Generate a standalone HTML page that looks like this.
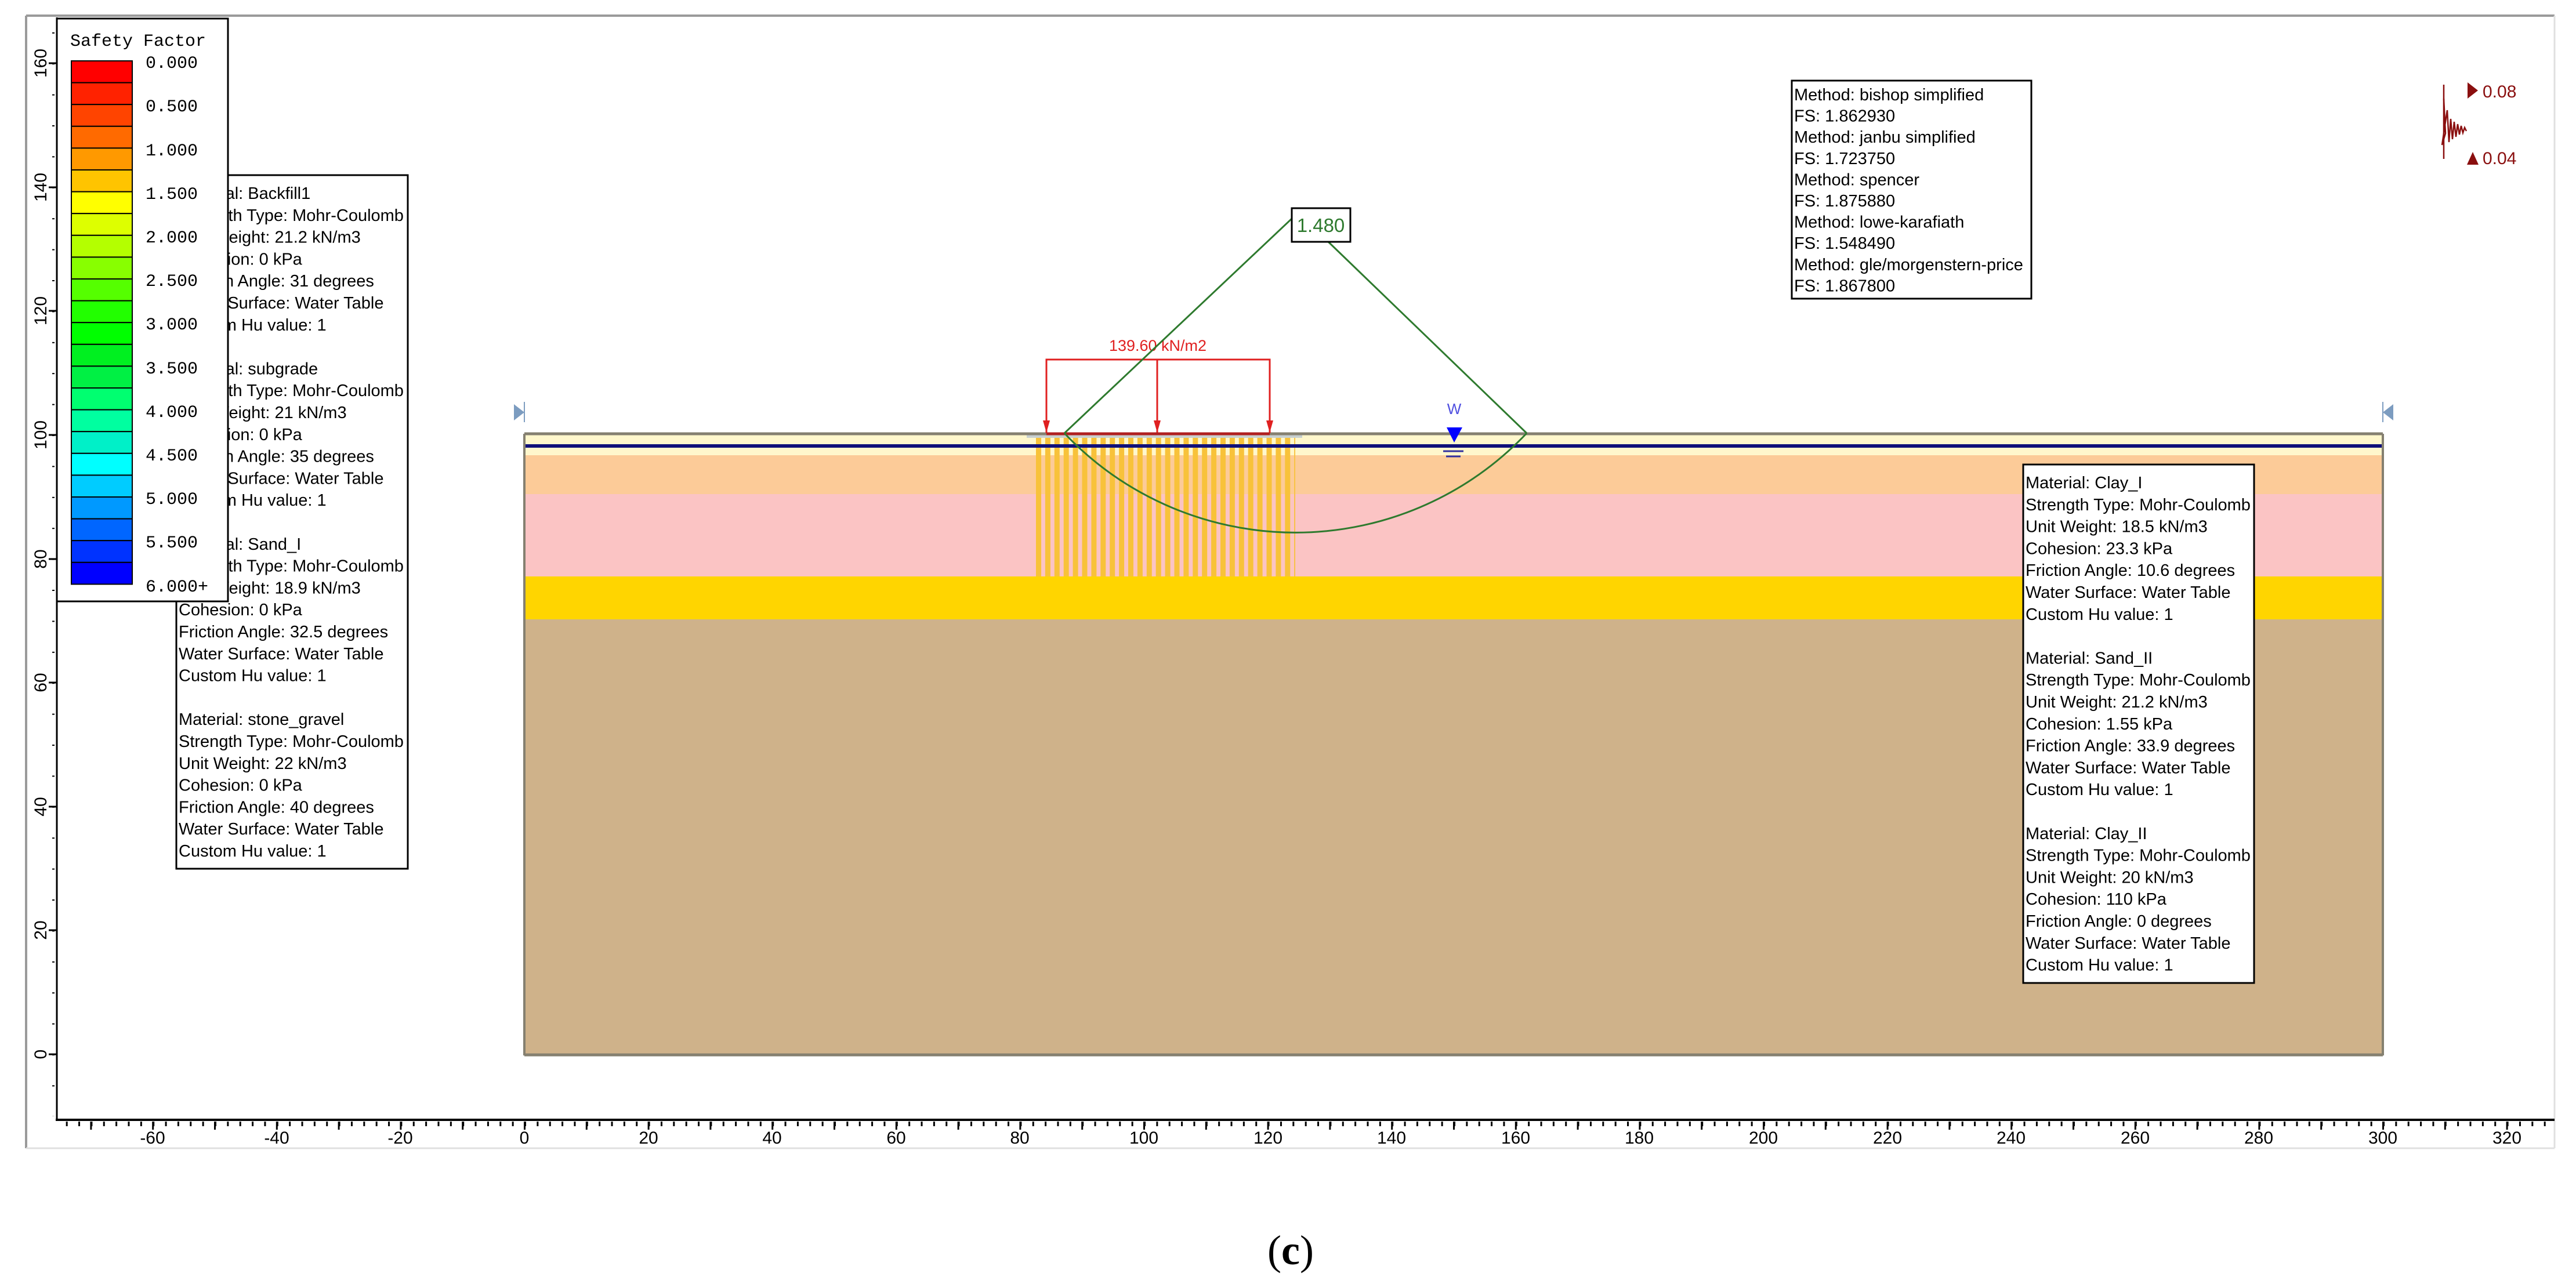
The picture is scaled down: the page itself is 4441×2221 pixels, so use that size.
<!DOCTYPE html>
<html><head><meta charset="utf-8"><style>
html,body{margin:0;padding:0;background:#fff;width:4441px;height:2221px;overflow:hidden}
svg{display:block}
.t{font-family:"Liberation Sans",Arial,sans-serif;font-size:29px;fill:#000}
.m{font-family:"Liberation Mono",monospace;font-size:30px;fill:#000}
.ax{font-family:"Liberation Sans",Arial,sans-serif;font-size:30px;fill:#000}
</style></head><body>
<svg width="4441" height="2221" viewBox="0 0 4441 2221" xmlns="http://www.w3.org/2000/svg">
<defs>
<pattern id="xmin" x="904" y="0" width="21.36" height="2221" patternUnits="userSpaceOnUse"><rect x="0" y="1934" width="3" height="8" fill="#000"/></pattern>
<pattern id="xmaj" x="903" y="0" width="106.8" height="2221" patternUnits="userSpaceOnUse"><rect x="0" y="1934" width="3" height="14" fill="#000"/></pattern>
<pattern id="ymin" x="0" y="1818" width="100" height="53.4" patternUnits="userSpaceOnUse"><rect x="90" y="-1" width="4" height="3" fill="#000"/></pattern>
<pattern id="cols" x="1786" y="0" width="15.9" height="100" patternUnits="userSpaceOnUse"><rect x="0" y="0" width="9" height="100" fill="#f8c23a"/></pattern>
</defs>
<rect width="4441" height="2221" fill="#fff"/>
<line x1="45" y1="27" x2="45" y2="1980" stroke="#9a9a9a" stroke-width="4"/>
<line x1="45" y1="27" x2="4404" y2="27" stroke="#9a9a9a" stroke-width="4"/>
<line x1="45" y1="1980" x2="4404" y2="1980" stroke="#e0e0e0" stroke-width="3"/>
<line x1="4404" y1="27" x2="4404" y2="1980" stroke="#e0e0e0" stroke-width="3"/>
<line x1="98" y1="30" x2="98" y2="1932" stroke="#000" stroke-width="3"/>
<line x1="96" y1="1931" x2="4404" y2="1931" stroke="#000" stroke-width="4"/>
<rect x="100" y="1930" width="4300" height="30" fill="url(#xmin)"/>
<rect x="100" y="1930" width="4300" height="30" fill="url(#xmaj)"/>
<rect x="80" y="30" width="17" height="1895" fill="url(#ymin)"/>
<g stroke="#000" stroke-width="3">
<line x1="84" y1="109" x2="97" y2="109"/><line x1="84" y1="323" x2="97" y2="323"/><line x1="84" y1="536" x2="97" y2="536"/><line x1="84" y1="750" x2="97" y2="750"/><line x1="84" y1="964" x2="97" y2="964"/><line x1="84" y1="1177" x2="97" y2="1177"/><line x1="84" y1="1391" x2="97" y2="1391"/><line x1="84" y1="1604" x2="97" y2="1604"/><line x1="84" y1="1818" x2="97" y2="1818"/>
</g>
<g class="ax" text-anchor="middle">
<text transform="translate(80,109) rotate(-90)">160</text>
<text transform="translate(80,323) rotate(-90)">140</text>
<text transform="translate(80,536) rotate(-90)">120</text>
<text transform="translate(80,750) rotate(-90)">100</text>
<text transform="translate(80,964) rotate(-90)">80</text>
<text transform="translate(80,1177) rotate(-90)">60</text>
<text transform="translate(80,1391) rotate(-90)">40</text>
<text transform="translate(80,1604) rotate(-90)">20</text>
<text transform="translate(80,1818) rotate(-90)">0</text>
</g>
<g class="ax" text-anchor="middle" transform="translate(0,1972)">
<text x="263" y="0">-60</text><text x="477" y="0">-40</text><text x="690" y="0">-20</text><text x="904" y="0">0</text>
<text x="1118" y="0">20</text><text x="1331" y="0">40</text><text x="1545" y="0">60</text><text x="1758" y="0">80</text>
<text x="1972" y="0">100</text><text x="2186" y="0">120</text><text x="2399" y="0">140</text><text x="2613" y="0">160</text>
<text x="2826" y="0">180</text><text x="3040" y="0">200</text><text x="3254" y="0">220</text><text x="3467" y="0">240</text>
<text x="3681" y="0">260</text><text x="3894" y="0">280</text><text x="4108" y="0">300</text><text x="4322" y="0">320</text>
</g>
<rect x="904" y="750" width="3204" height="1068" fill="#cfb28a"/>
<rect x="904" y="750" width="3204" height="35" fill="#fff7cc"/>
<rect x="904" y="785" width="3204" height="67" fill="#fccb98"/>
<rect x="904" y="852" width="3204" height="142" fill="#fbc4c4"/>
<rect x="904" y="994" width="3204" height="74" fill="#ffd500"/>
<rect x="1786" y="754" width="447" height="240" fill="url(#cols)"/>
<rect x="1770" y="749" width="475" height="6" fill="#c8d0d0"/>
<rect x="904" y="766" width="3204" height="6" fill="#10107a"/>
<line x1="904" y1="748" x2="4108" y2="748" stroke="#858070" stroke-width="5"/>
<line x1="904" y1="748" x2="904" y2="1820" stroke="#858070" stroke-width="4"/>
<line x1="4108" y1="748" x2="4108" y2="1820" stroke="#858070" stroke-width="4"/>
<line x1="904" y1="1819" x2="4108" y2="1819" stroke="#858070" stroke-width="5"/>
<polygon points="886,697 904,711 886,725" fill="#7c9cc0"/>
<line x1="904" y1="693" x2="904" y2="728" stroke="#7c9cc0" stroke-width="2"/>
<polygon points="4126,697 4108,711 4126,725" fill="#7c9cc0"/>
<line x1="4108" y1="693" x2="4108" y2="728" stroke="#7c9cc0" stroke-width="2"/>
<g stroke="#e02020" stroke-width="3" fill="none">
<polyline points="1804,747 1804,620 2189,620 2189,747"/>
<line x1="1995" y1="620" x2="1995" y2="747"/>
</g>
<line x1="1804" y1="748" x2="2189" y2="748" stroke="#b02020" stroke-width="5"/>
<g fill="#e02020">
<polygon points="1798,725 1810,725 1804,746"/><polygon points="1989,725 2001,725 1995,746"/><polygon points="2183,725 2195,725 2189,746"/>
</g>
<text x="1996" y="605" text-anchor="middle" font-family="Liberation Sans,Arial,sans-serif" font-size="27" fill="#e02020">139.60 kN/m2</text>
<g stroke="#2e7a2e" stroke-width="3" fill="none">
<line x1="2227" y1="377" x2="1835" y2="747"/>
<line x1="2290" y1="417" x2="2632" y2="747"/>
<path d="M1835 747 A549 549 0 0 0 2632 747"/>
</g>
<rect x="2227" y="359" width="101" height="58" fill="#fff" stroke="#000" stroke-width="3"/>
<text x="2277" y="400" text-anchor="middle" font-family="Liberation Sans,Arial,sans-serif" font-size="33" fill="#2e7a2e">1.480</text>
<text x="2507" y="714" text-anchor="middle" font-family="Liberation Sans,Arial,sans-serif" font-size="26" fill="#5050e0">W</text>
<polygon points="2494,737 2521,737 2507,763" fill="#0000ff"/>
<line x1="2488" y1="778" x2="2523" y2="778" stroke="#3030a0" stroke-width="3"/>
<line x1="2493" y1="787" x2="2518" y2="787" stroke="#3030a0" stroke-width="3"/>
<rect x="304" y="302" width="399" height="1196" fill="#fff" stroke="#000" stroke-width="3"/>
<text class="t">
<tspan x="308" y="343">Material: Backfill1</tspan>
<tspan x="308" dy="37.8">Strength Type: Mohr-Coulomb</tspan>
<tspan x="308" dy="37.8">Unit Weight: 21.2 kN/m3</tspan>
<tspan x="308" dy="37.8">Cohesion: 0 kPa</tspan>
<tspan x="308" dy="37.8">Friction Angle: 31 degrees</tspan>
<tspan x="308" dy="37.8">Water Surface: Water Table</tspan>
<tspan x="308" dy="37.8">Custom Hu value: 1</tspan>
<tspan x="308" dy="75.6">Material: subgrade</tspan>
<tspan x="308" dy="37.8">Strength Type: Mohr-Coulomb</tspan>
<tspan x="308" dy="37.8">Unit Weight: 21 kN/m3</tspan>
<tspan x="308" dy="37.8">Cohesion: 0 kPa</tspan>
<tspan x="308" dy="37.8">Friction Angle: 35 degrees</tspan>
<tspan x="308" dy="37.8">Water Surface: Water Table</tspan>
<tspan x="308" dy="37.8">Custom Hu value: 1</tspan>
<tspan x="308" dy="75.6">Material: Sand_I</tspan>
<tspan x="308" dy="37.8">Strength Type: Mohr-Coulomb</tspan>
<tspan x="308" dy="37.8">Unit Weight: 18.9 kN/m3</tspan>
<tspan x="308" dy="37.8">Cohesion: 0 kPa</tspan>
<tspan x="308" dy="37.8">Friction Angle: 32.5 degrees</tspan>
<tspan x="308" dy="37.8">Water Surface: Water Table</tspan>
<tspan x="308" dy="37.8">Custom Hu value: 1</tspan>
<tspan x="308" dy="75.6">Material: stone_gravel</tspan>
<tspan x="308" dy="37.8">Strength Type: Mohr-Coulomb</tspan>
<tspan x="308" dy="37.8">Unit Weight: 22 kN/m3</tspan>
<tspan x="308" dy="37.8">Cohesion: 0 kPa</tspan>
<tspan x="308" dy="37.8">Friction Angle: 40 degrees</tspan>
<tspan x="308" dy="37.8">Water Surface: Water Table</tspan>
<tspan x="308" dy="37.8">Custom Hu value: 1</tspan>
</text>
<rect x="3488" y="801" width="398" height="894" fill="#fff" stroke="#000" stroke-width="3"/>
<text class="t">
<tspan x="3492" y="842">Material: Clay_I</tspan>
<tspan x="3492" dy="37.8">Strength Type: Mohr-Coulomb</tspan>
<tspan x="3492" dy="37.8">Unit Weight: 18.5 kN/m3</tspan>
<tspan x="3492" dy="37.8">Cohesion: 23.3 kPa</tspan>
<tspan x="3492" dy="37.8">Friction Angle: 10.6 degrees</tspan>
<tspan x="3492" dy="37.8">Water Surface: Water Table</tspan>
<tspan x="3492" dy="37.8">Custom Hu value: 1</tspan>
<tspan x="3492" dy="75.6">Material: Sand_II</tspan>
<tspan x="3492" dy="37.8">Strength Type: Mohr-Coulomb</tspan>
<tspan x="3492" dy="37.8">Unit Weight: 21.2 kN/m3</tspan>
<tspan x="3492" dy="37.8">Cohesion: 1.55 kPa</tspan>
<tspan x="3492" dy="37.8">Friction Angle: 33.9 degrees</tspan>
<tspan x="3492" dy="37.8">Water Surface: Water Table</tspan>
<tspan x="3492" dy="37.8">Custom Hu value: 1</tspan>
<tspan x="3492" dy="75.6">Material: Clay_II</tspan>
<tspan x="3492" dy="37.8">Strength Type: Mohr-Coulomb</tspan>
<tspan x="3492" dy="37.8">Unit Weight: 20 kN/m3</tspan>
<tspan x="3492" dy="37.8">Cohesion: 110 kPa</tspan>
<tspan x="3492" dy="37.8">Friction Angle: 0 degrees</tspan>
<tspan x="3492" dy="37.8">Water Surface: Water Table</tspan>
<tspan x="3492" dy="37.8">Custom Hu value: 1</tspan>
</text>
<rect x="3089" y="139" width="413" height="376" fill="#fff" stroke="#000" stroke-width="3"/>
<text class="t">
<tspan x="3093" y="173">Method: bishop simplified</tspan>
<tspan x="3093" dy="36.6">FS: 1.862930</tspan>
<tspan x="3093" dy="36.6">Method: janbu simplified</tspan>
<tspan x="3093" dy="36.6">FS: 1.723750</tspan>
<tspan x="3093" dy="36.6">Method: spencer</tspan>
<tspan x="3093" dy="36.6">FS: 1.875880</tspan>
<tspan x="3093" dy="36.6">Method: lowe-karafiath</tspan>
<tspan x="3093" dy="36.6">FS: 1.548490</tspan>
<tspan x="3093" dy="36.6">Method: gle/morgenstern-price</tspan>
<tspan x="3093" dy="36.6">FS: 1.867800</tspan>
</text>
<g stroke="#8a0f0f" stroke-width="2.5" fill="none">
<line x1="4213" y1="146" x2="4213" y2="274"/>
<polyline points="4213,170 4216,230 4210,250 4219,190 4222,245 4225,205 4228,240 4231,210 4234,236 4237,214 4240,232 4243,217 4246,229 4249,220 4252,226"/>
</g>
<polygon points="4254,142 4272,156 4254,170" fill="#8a0f0f"/>
<polygon points="4253,284 4263,262 4273,284" fill="#8a0f0f"/>
<text x="4280" y="168" font-family="Liberation Sans,Arial,sans-serif" font-size="30" fill="#8a0f0f">0.08</text>
<text x="4280" y="283" font-family="Liberation Sans,Arial,sans-serif" font-size="30" fill="#8a0f0f">0.04</text>
<rect x="98" y="32" width="295" height="1005" fill="#fff" stroke="#000" stroke-width="3"/>
<text class="m" x="121" y="79" font-size="31">Safety Factor</text>
<g stroke="#000" stroke-width="2">
<rect x="123" y="105.0" width="105" height="37.6" fill="#ff0000"/>
<rect x="123" y="142.6" width="105" height="37.6" fill="#ff2200"/>
<rect x="123" y="180.2" width="105" height="37.6" fill="#ff4400"/>
<rect x="123" y="217.8" width="105" height="37.6" fill="#ff6a00"/>
<rect x="123" y="255.4" width="105" height="37.6" fill="#ff9900"/>
<rect x="123" y="293.0" width="105" height="37.6" fill="#ffc400"/>
<rect x="123" y="330.6" width="105" height="37.6" fill="#ffff00"/>
<rect x="123" y="368.2" width="105" height="37.6" fill="#ddff00"/>
<rect x="123" y="405.8" width="105" height="37.6" fill="#b4ff00"/>
<rect x="123" y="443.4" width="105" height="37.6" fill="#88ff00"/>
<rect x="123" y="481.0" width="105" height="37.6" fill="#55ff00"/>
<rect x="123" y="518.6" width="105" height="37.6" fill="#22ff00"/>
<rect x="123" y="556.2" width="105" height="37.6" fill="#00ff00"/>
<rect x="123" y="593.8" width="105" height="37.6" fill="#00f020"/>
<rect x="123" y="631.4" width="105" height="37.6" fill="#00f044"/>
<rect x="123" y="669.0" width="105" height="37.6" fill="#00ff70"/>
<rect x="123" y="706.6" width="105" height="37.6" fill="#00ffa0"/>
<rect x="123" y="744.2" width="105" height="37.6" fill="#00f0c8"/>
<rect x="123" y="781.8" width="105" height="37.6" fill="#00ffff"/>
<rect x="123" y="819.4" width="105" height="37.6" fill="#00ccff"/>
<rect x="123" y="857.0" width="105" height="37.6" fill="#0099ff"/>
<rect x="123" y="894.6" width="105" height="37.6" fill="#0066ff"/>
<rect x="123" y="932.2" width="105" height="37.6" fill="#0033ff"/>
<rect x="123" y="969.8" width="105" height="37.6" fill="#0000ff"/>
</g>
<g class="m">
<text x="251" y="117">0.000</text>
<text x="251" y="192">0.500</text>
<text x="251" y="268">1.000</text>
<text x="251" y="343">1.500</text>
<text x="251" y="418">2.000</text>
<text x="251" y="493">2.500</text>
<text x="251" y="568">3.000</text>
<text x="251" y="644">3.500</text>
<text x="251" y="719">4.000</text>
<text x="251" y="794">4.500</text>
<text x="251" y="869">5.000</text>
<text x="251" y="944">5.500</text>
<text x="251" y="1020">6.000+</text>
</g>
<text x="2225" y="2180" text-anchor="middle" font-family="Liberation Serif,serif" font-size="72" fill="#000">(<tspan font-weight="bold">c</tspan>)</text>
</svg>
</body></html>
